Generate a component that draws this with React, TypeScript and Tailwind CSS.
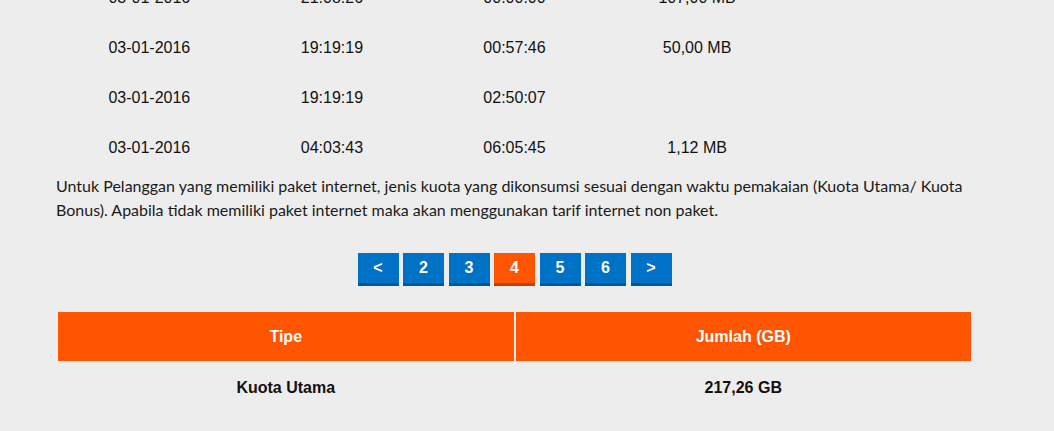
import React from "react";

const rows = [
  ["03-01-2016", "21:08:26", "00:00:00", "107,00 MB"],
  ["03-01-2016", "19:19:19", "00:57:46", "50,00 MB"],
  ["03-01-2016", "19:19:19", "02:50:07", ""],
  ["03-01-2016", "04:03:43", "06:05:45", "1,12 MB"],
];

const pages = ["<", "2", "3", "4", "5", "6", ">"];

export default function App() {
  return (
    <div className="h-[431px] overflow-hidden bg-[#ededed]">
      <div className="ml-[56px] w-[917px]">
        <div className="-mt-[27px] px-[2px] font-['Liberation_Sans',Arial,sans-serif] text-[16px] text-[#111]">
          {rows.map((r, i) => (
            <div key={i} className="grid h-[50px] grid-cols-5 items-center text-center">
              {r.map((c, j) => (
                <div key={j}>{c}</div>
              ))}
              <div />
            </div>
          ))}
        </div>
        <p className="mt-[1px] font-['Lato',sans-serif] text-[16px] leading-[24px] text-[#1a1a1a]">
          Untuk Pelanggan yang memiliki paket internet, jenis kuota yang dikonsumsi sesuai dengan waktu pemakaian (Kuota Utama/ Kuota Bonus). Apabila tidak memiliki paket internet maka akan menggunakan tarif internet non paket.
        </p>
        <div className="mt-[31px] flex justify-center gap-[4.5px] font-['Liberation_Sans',Arial,sans-serif] text-[16px] font-bold text-white">
          {pages.map((p) => (
            <div
              key={p}
              className={
                p === "4"
                  ? "flex h-[33px] w-[41px] items-center justify-center border-b-[3px] border-[#c43f00] bg-[#ff5400]"
                  : "flex h-[33px] w-[41px] items-center justify-center border-b-[3px] border-[#00569a] bg-[#0072c6]"
              }
            >
              {p}
            </div>
          ))}
        </div>
        <div className="mt-[26px] px-[2px] font-['Liberation_Sans',Arial,sans-serif] text-[16px] font-bold">
          <div className="flex gap-[2px] text-white">
            <div className="flex h-[49px] flex-1 items-center justify-center bg-[#ff5400]">Tipe</div>
            <div className="flex h-[49px] flex-1 items-center justify-center bg-[#ff5400]">Jumlah (GB)</div>
          </div>
          <div className="mt-[2px] flex gap-[2px] text-[#111]">
            <div className="flex h-[49px] flex-1 items-center justify-center">Kuota Utama</div>
            <div className="flex h-[49px] flex-1 items-center justify-center">217,26 GB</div>
          </div>
        </div>
      </div>
    </div>
  );
}
